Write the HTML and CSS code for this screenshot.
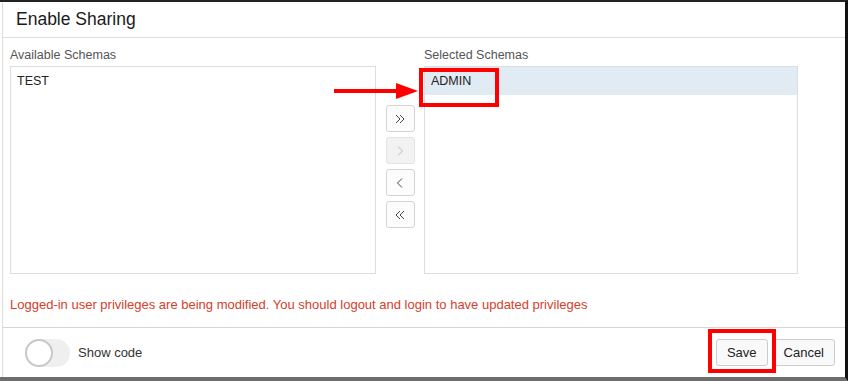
FILE: index.html
```html
<!DOCTYPE html>
<html lang="en">
<head>
    <meta charset="UTF-8">
    <meta name="viewport" content="width=device-width, initial-scale=1.0">
    <title>Enable Sharing</title>
    <link rel="stylesheet" href="styles.css">
</head>
<body>
    <div class="screen">
        <div class="dialog">
            <div class="dialog-header">
                <h2>Enable Sharing</h2>
            </div>

            <div class="dialog-body">
                <div class="shuttle">
                    <div class="shuttle-col">
                        <label>Available Schemas</label>
                        <ul class="list">
                            <li>TEST</li>
                        </ul>
                    </div>

                    <div class="shuttle-actions">
                        <button class="move" title="Move all">
                            <svg width="12" height="12" viewBox="0 0 12 12"><path d="M2 2l4 4-4 4M6 2l4 4-4 4" fill="none" stroke="#444" stroke-width="1"/></svg>
                        </button>
                        <button class="move disabled" title="Move">
                            <svg width="12" height="12" viewBox="0 0 12 12"><path d="M4 1.5l4.5 4.5L4 10.5" fill="none" stroke="#bbb" stroke-width="1"/></svg>
                        </button>
                        <button class="move" title="Remove">
                            <svg width="12" height="12" viewBox="0 0 12 12"><path d="M8 1.5L3.5 6 8 10.5" fill="none" stroke="#444" stroke-width="1"/></svg>
                        </button>
                        <button class="move" title="Remove all">
                            <svg width="12" height="12" viewBox="0 0 12 12"><path d="M6 2L2 6l4 4M10 2L6 6l4 4" fill="none" stroke="#444" stroke-width="1"/></svg>
                        </button>
                    </div>

                    <div class="shuttle-col">
                        <label>Selected Schemas</label>
                        <ul class="list">
                            <li class="selected">ADMIN</li>
                        </ul>
                    </div>

                    <!-- пометки поверх скриншота -->
                    <div class="arrow"></div>
                    <div class="highlight highlight-admin"></div>
                </div>

                <p class="warning">Logged-in user privileges are being modified. You should logout and login to have updated privileges</p>
            </div>

            <div class="dialog-footer">
                <div class="toggle">
                    <span class="switch"><span class="knob"></span></span>
                    <span class="toggle-label">Show code</span>
                </div>
                <div class="footer-buttons">
                    <button class="btn">Save</button>
                    <button class="btn">Cancel</button>
                    <div class="highlight highlight-save"></div>
                </div>
            </div>
        </div>
    </div>
</body>
</html>
```

FILE: styles.css
```css
body {
    margin: 0;
    font-family: "Liberation Sans", Arial, sans-serif;
    background: #fff;
    color: #222;
}
.screen {
    width: 848px;
    height: 381px;
    box-sizing: border-box;
    border-top: 2px solid #222;
    border-right: 3px solid #111;
    border-bottom: 4px solid #6e6e6e;
    background: #fff;
}
.dialog {
    height: 100%;
    margin-left: 2px;
    border-left: 1px solid #ddd;
    display: flex;
    flex-direction: column;
}
.dialog-header {
    height: 35px;
    border-bottom: 1px solid #ddd;
    display: flex;
    align-items: center;
    padding-left: 13px;
}
.dialog-header h2 {
    margin: 0;
    font-size: 17.5px;
    font-weight: normal;
    color: #1a1a1a;
}
.dialog-body {
    flex: 1;
    padding: 9px 0 0 7px;
}
.shuttle {
    position: relative;
    display: grid;
    grid-template-columns: 366px 48px 374px;
}
.shuttle-col label {
    display: block;
    font-size: 12.5px;
    line-height: 16px;
    color: #555;
    margin-bottom: 3px;
}
.list {
    list-style: none;
    margin: 0;
    padding: 0;
    height: 208px;
    box-sizing: border-box;
    border: 1px solid #ddd;
}
.list li {
    height: 28px;
    line-height: 28px;
    padding-left: 6px;
    font-size: 12.5px;
    color: #222;
}
.list li.selected {
    background: #e0ebf3;
}
.shuttle-actions {
    display: flex;
    flex-direction: column;
    align-items: center;
    gap: 5px;
    padding-top: 58px;
}
.move {
    width: 29px;
    height: 27px;
    padding: 0;
    border: 1px solid #d4d4d4;
    border-radius: 3px;
    background: #fcfcfc;
    display: flex;
    align-items: center;
    justify-content: center;
}
.move.disabled {
    background: #f2f2f2;
    border-color: #e4e4e4;
}
.warning {
    margin: 23px 0 0;
    font-size: 13px;
    line-height: 16px;
    color: #d5402b;
}
.dialog-footer {
    height: 49px;
    border-top: 1px solid #d4d4d4;
    display: flex;
    align-items: center;
    justify-content: space-between;
    padding: 0 10px 0 22px;
}
.toggle {
    display: flex;
    align-items: center;
    gap: 8px;
}
.switch {
    position: relative;
    width: 45px;
    height: 28px;
    border-radius: 14px;
    background: #efefef;
}
.knob {
    position: absolute;
    left: 0;
    top: 0;
    width: 24px;
    height: 24px;
    border-radius: 50%;
    border: 2px solid #c8c8c8;
    background: #fff;
}
.toggle-label {
    font-size: 13px;
    color: #333;
}
.footer-buttons {
    position: relative;
    display: flex;
    gap: 5px;
}
.btn {
    height: 27px;
    padding: 0 10px;
    font-family: "Liberation Sans", Arial, sans-serif;
    font-size: 13px;
    color: #222;
    background: #f9f9f9;
    border: 1px solid #ccc;
    border-radius: 3px;
}
.highlight {
    position: absolute;
    border: 4px solid #f00;
    box-sizing: border-box;
}
.highlight-admin {
    left: 409px;
    top: 21px;
    width: 80px;
    height: 39px;
}
.highlight-save {
    left: -8px;
    top: -10px;
    width: 68px;
    height: 44px;
}
.arrow {
    position: absolute;
    left: 324px;
    top: 42px;
    width: 62px;
    height: 4px;
    background: #f00;
}
.arrow::after {
    content: "";
    position: absolute;
    left: 62px;
    top: -6px;
    border-left: 22px solid #f00;
    border-top: 8px solid transparent;
    border-bottom: 8px solid transparent;
}
```
